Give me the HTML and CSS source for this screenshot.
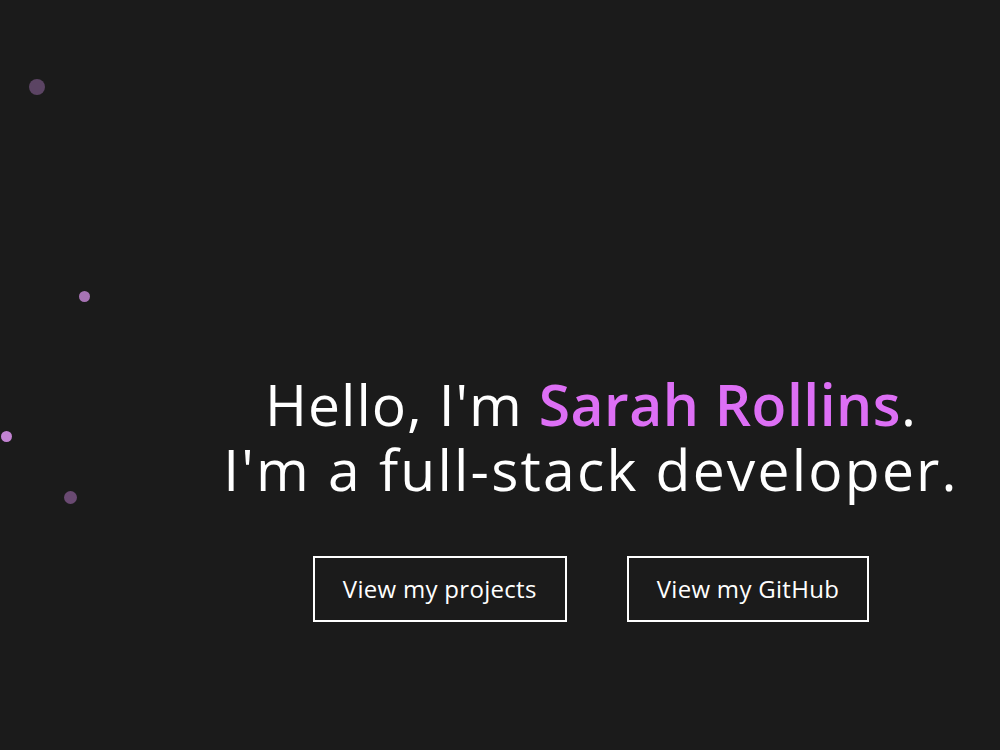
FILE: index.html
```html
<!DOCTYPE html>
<html lang="en">
<head>
  <meta charset="UTF-8">
  <meta name="viewport" content="width=device-width, initial-scale=1.0">
  <title>Sarah Rollins</title>
  <link rel="stylesheet" href="styles.css">
</head>
<body>
  <div class="particles">
    <span class="dot dot-1"></span>
    <span class="dot dot-2"></span>
    <span class="dot dot-3"></span>
    <span class="dot dot-4"></span>
  </div>
  <section class="hero">
    <h1 class="intro">
      Hello, I'm <span class="name">Sarah Rollins</span>.<br>
      <span class="role">I'm a full-stack developer.</span>
    </h1>
    <div class="actions">
      <a class="button" href="#projects">View my projects</a>
      <a class="button" href="#github">View my GitHub</a>
    </div>
  </section>
</body>
</html>
```

FILE: styles.css
```css
body {
  font-family: "Open Sans", Arial, sans-serif;
  margin: 0;
  padding: 0;
  background-color: #1b1b1b;
  color: #ffffff;
  height: 750px;
  overflow: hidden;
}

.particles {
  position: absolute;
  top: 0;
  left: 0;
  width: 100%;
  height: 100%;
  pointer-events: none;
}

.dot {
  position: absolute;
  border-radius: 50%;
}

.dot-1 {
  left: 29px;
  top: 79px;
  width: 16px;
  height: 16px;
  background-color: #5b4463;
}

.dot-2 {
  left: 79px;
  top: 291px;
  width: 11px;
  height: 11px;
  background-color: #a673b3;
}

.dot-3 {
  left: 1px;
  top: 431px;
  width: 11px;
  height: 11px;
  background-color: #c283d2;
}

.dot-4 {
  left: 64px;
  top: 491px;
  width: 13px;
  height: 13px;
  background-color: #6a4a72;
}

.hero {
  padding-left: 182px;
  padding-top: 372px;
  text-align: center;
}

.intro {
  margin: 0;
  font-size: 57px;
  font-weight: 400;
  line-height: 65px;
  letter-spacing: 1px;
}

.name {
  color: #dd6ff5;
  font-weight: 600;
  letter-spacing: 0.5px;
}

.role {
  letter-spacing: 2.2px;
}

.actions {
  display: flex;
  justify-content: center;
  gap: 60px;
  margin-top: 54px;
}

.button {
  display: block;
  padding: 0 28px;
  height: 62px;
  line-height: 62px;
  font-size: 24px;
  letter-spacing: 0.3px;
  color: #ffffff;
  text-decoration: none;
  border: 2px solid #ffffff;
}
```
